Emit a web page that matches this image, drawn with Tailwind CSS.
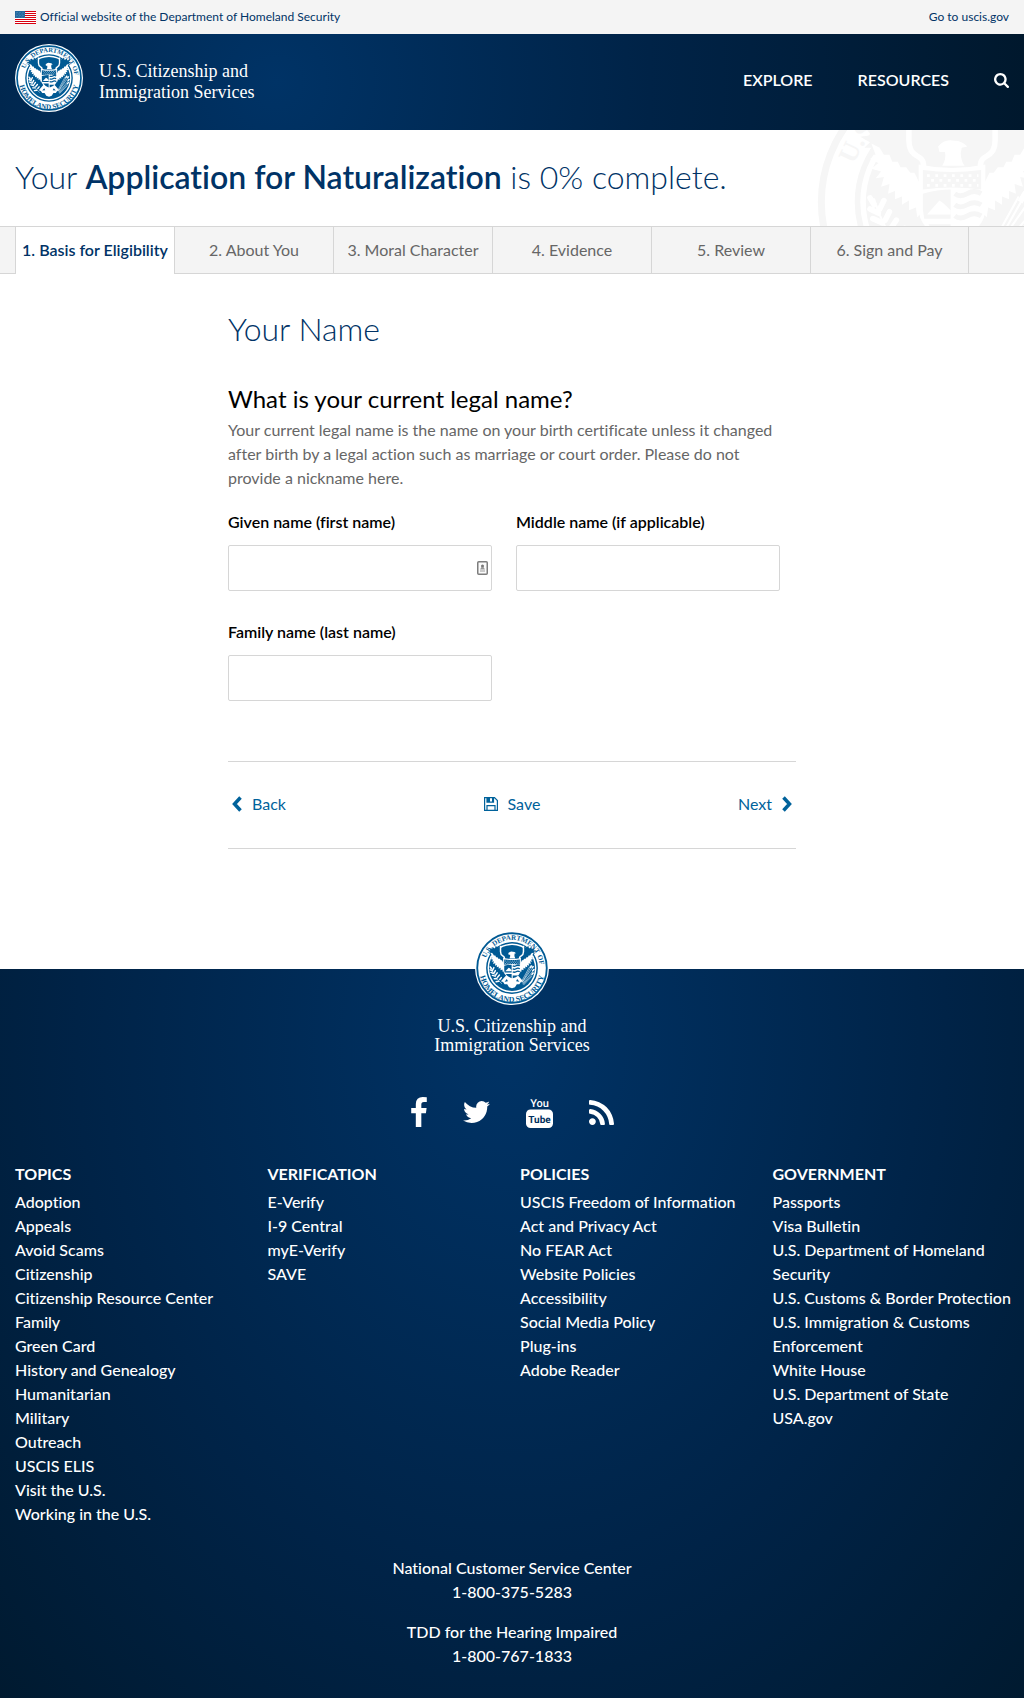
<!DOCTYPE html>
<html lang="en">
<head>
<meta charset="utf-8">
<meta name="viewport" content="width=device-width, initial-scale=1">
<title>Application for Naturalization | USCIS</title>
<script src="https://cdn.jsdelivr.net/npm/@tailwindcss/browser@4"></script>
</head>
<body class="bg-white font-['Lato','Open_Sans',sans-serif] text-base leading-6 text-black [font-variant-ligatures:no-common-ligatures]">

<!-- Department seal: currentColor is the ink, the rest is white -->
<svg class="hidden" aria-hidden="true">
  <defs>
    <path id="arc-top" d="M-71 -25A75 75 0 0 1 75 -6"/>
    <path id="arc-bottom" d="M-88 4A88 88 0 0 0 88 4"/>
    <g id="wing">
      <path fill="currentColor" d="M-33 -60L-38 -54L-44 -60L-46 -53L-53 -57L-53 -52L-62 -53L-58 -48L-66 -47L-59 -43L-63 -39L-54 -39L-57 -34L-50 -34L-51 -28L-44 -29L-44 -23L-38 -25L-36 -18L-31 -21L-29 -13L-22 -13L-22 -26L-31 -42Z"/>
      <path fill="white" d="M-58 -42L-52 -39L-49 -34L-45 -34L-43 -29L-39 -29L-37 -25L-33 -25L-30 -21L-27 -21L-23 -13L-20 6L-25 11L-26 4L-31 6L-31 -1L-36 2L-36 -4L-41 -2L-41 -8L-46 -6L-45 -13L-51 -11L-49 -18L-55 -17L-51 -22L-58 -24L-53 -28L-59 -31L-55 -34Z"/>
      <path fill="none" stroke="white" stroke-width="4" d="M-31 -60V-44Q-31 -36 -25 -33T-21 -24"/>
    </g>
    <symbol id="seal" viewBox="-100 -100 200 200">
      <circle r="100" fill="white"/>
      <circle r="94" fill="none" stroke="currentColor" stroke-width="5"/>
      <circle r="68" fill="none" stroke="currentColor" stroke-width="4"/>
      <circle r="62" fill="currentColor"/>
      <g fill="currentColor" font-family="'Liberation Serif',serif" font-weight="700" font-size="19" text-anchor="middle" text-rendering="geometricPrecision">
        <text><textPath href="#arc-top" startOffset="50%">U.S. DEPARTMENT OF</textPath></text>
        <text font-size="21"><textPath href="#arc-bottom" startOffset="50%">HOMELAND SECURITY</textPath></text>
      </g>
      <use href="#wing"/>
      <use href="#wing" transform="scale(-1 1)"/>
      <path fill="white" d="M-10 -40Q-5 -46 2 -44Q7 -44 11 -40L7 -39Q5 -32 9 -26H-7Q-4 -31 -5 -36L-9 -36Z"/>
      <!-- tail and legs -->
      <path fill="white" d="M-16 20L-30 36L-24 38L-20 44L-13 44L-8 52L0 55L8 52L13 44L20 44L24 38L30 36L16 20Z"/>
      <path fill="currentColor" d="M-14 30L-20 37L-11 36ZM14 30L20 37L11 36Z"/>
      <!-- shield -->
      <path fill="white" d="M-24 -27Q0 -22 24 -27V5Q24 20 0 31Q-24 20 -24 5Z"/>
      <path fill="currentColor" d="M-21 -23Q0 -20 21 -23V-9Q0 -12 -21 -9Z"/>
      <path stroke="white" stroke-width="2" stroke-dasharray="2 4" d="M-18 -19H19M-15 -15.500H18M-18 -12H19"/>
      <path fill="currentColor" d="M-21 -6Q-10 -9 -1 -9V12H-20L-21 5ZM2 20H17Q11 25 2 28ZM-17 16H-1V28Q-12 23 -17 16Z"/>
      <path fill="white" d="M-18 9L-9 -1L-6 1L-1 6V9Z"/>
      <path fill="none" stroke="currentColor" stroke-width="3.500" d="M2 -6Q6 -3 11 -6T21 -6M2 2Q6 5 11 2T21 2M2 10Q6 13 11 10T21 10"/>
      <!-- olive branch -->
      <g fill="none" stroke="white" stroke-linecap="round">
        <path stroke-width="1.500" d="M-28 42Q-48 26 -56 -2"/>
        <path stroke-width="4" d="M-56 2L-59 -3M-53 8L-59 5M-52 5L-49 -1M-50 15L-57 12M-48 13L-45 7M-46 22L-53 20M-44 19L-40 13M-41 29L-48 29M-39 25L-34 19M-36 36L-43 37M-33 31L-29 26"/>
      </g>
      <!-- arrows -->
      <g fill="none" stroke="white" stroke-width="1.500">
        <path d="M27 40L58 -4M28 38L53 -6M29 42L60 4M30 44L58 13M26 36L48 -4M31 46L54 22"/>
        <path stroke-width="4" d="M54 0L58 -5M55 9L60 3M49 0L53 -7M53 18L58 12"/>
      </g>
    </symbol>
  </defs>
</svg>

<div class="flex items-center justify-between bg-[#f4f4f4] px-[15px] py-[5px] text-xs leading-6 text-[#003366]">
  <p class="flex items-center gap-1">
    <svg class="h-[13px] w-[21px]" viewBox="0 0 21 13" role="img" aria-label="Flag of the United States">
      <path fill="#fff" d="M0 0h21v13H0z"/>
      <path stroke="#d8000f" d="M0 .5h21M0 2.500h21M0 4.500h21M0 6.500h21M0 8.500h21M0 10.500h21M0 12.500h21"/>
      <path fill="#24699f" d="M0 0h10v7H0z"/>
      <path stroke="#8db4d2" stroke-width=".5" stroke-dasharray=".5 1" d="M1 1.500h8M1.500 3h8M1 4.500h8M1.500 6h8"/>
    </svg>
    Official website of the Department of Homeland Security
  </p>
  <a href="#">Go to uscis.gov</a>
</div>

<header class="flex items-center justify-between bg-[#003366] bg-[radial-gradient(circle_at_27%_50%,#003366_0%,#002347_50%,#00182d_100%)] px-[15px] pt-2.5 pb-[18px] text-white">
  <a href="#" class="flex items-center gap-4">
    <svg class="size-[68px] text-[#005a94]" role="img" aria-label="Department of Homeland Security seal"><use href="#seal"/></svg>
    <span class="pt-2 font-['Liberation_Serif',serif] text-lg leading-[21px]">U.S. Citizenship and<br>Immigration Services</span>
  </a>
  <nav class="flex items-center gap-[45px] pt-1 font-semibold">
    <a href="#">EXPLORE</a>
    <a href="#">RESOURCES</a>
    <button type="button" aria-label="Search">
      <svg class="size-[15px]" viewBox="64 128 1664 1664" fill="currentColor"><path d="M1216 832q0-185-131.500-316.500t-316.500-131.500-316.500 131.500-131.500 316.500 131.500 316.500 316.500 131.500 316.500-131.500 131.500-316.500zm512 832q0 52-38 90t-90 38q-54 0-90-38l-343-342q-179 124-399 124-143 0-273.500-55.500t-225-150-150-225-55.500-273.500 55.500-273.500 150-225 225-150 273.500-55.500 273.500 55.500 225 150 150 225 55.500 273.500q0 220-124 399l343 343q37 37 37 90z"/></svg>
    </button>
  </nav>
</header>

<div class="relative overflow-hidden px-[15px] pt-[23px] pb-[25px]">
  <svg class="absolute -top-[67px] -right-[67px] size-[278px] text-[#f6f6f6]" aria-hidden="true"><use href="#seal"/></svg>
  <h1 class="relative text-[32px] leading-[48px] font-light text-[#003366]">Your <strong class="font-semibold">Application for Naturalization</strong> is 0% complete.</h1>
</div>

<nav class="border-y border-[#d6d6d6] bg-[#f4f4f4] px-[15px]">
  <ol class="-mb-px grid grid-cols-[160px_159px_159px_159px_159px_158px] text-center leading-[46px] text-[#666]">
    <li class="border-x border-[#d6d6d6] bg-white pb-px font-semibold text-[#003366]"><a href="#" aria-current="step">1. Basis for Eligibility</a></li>
    <li class="border-r border-[#d6d6d6]"><a href="#">2. About You</a></li>
    <li class="border-r border-[#d6d6d6]"><a href="#">3. Moral Character</a></li>
    <li class="border-r border-[#d6d6d6]"><a href="#">4. Evidence</a></li>
    <li class="border-r border-[#d6d6d6]"><a href="#">5. Review</a></li>
    <li class="border-r border-[#d6d6d6]"><a href="#">6. Sign and Pay</a></li>
  </ol>
</nav>

<main class="mx-auto max-w-[568px] pt-[31px] pb-[120px]">
  <h2 class="text-[32px] leading-[48px] font-light text-[#003366]">Your Name</h2>
  <form>
    <h3 class="mt-7 mb-px text-2xl leading-9">What is your current legal name?</h3>
    <p class="text-[#666]">Your current legal name is the name on your birth certificate unless it changed after birth by a legal action such as marriage or court order. Please do not provide a nickname here.</p>
    <div class="mt-5 mr-4 grid grid-cols-2 gap-x-6 gap-y-[29px]">
      <div>
        <label for="given" class="block font-semibold">Given name (first name)</label>
        <div class="relative mt-[11px]">
          <input id="given" type="text" class="block h-[46px] w-full rounded-xs border border-[#d6d6d6] pr-8 pl-3">
          <svg class="pointer-events-none absolute top-4 right-1 h-[14px] w-[11px]" viewBox="0 0 11 14" aria-hidden="true"><rect x=".75" y=".75" width="9.500" height="12.500" rx="1" fill="#fafafa" stroke="#7d7d7d" stroke-width="1.500"/><circle cx="5.500" cy="5" r="1.500" fill="#777"/><path fill="#999" d="M4.500 6h2l1.500 2.500h-5zM3 9.500h5v1h-5z"/></svg>
        </div>
      </div>
      <div>
        <label for="middle" class="block font-semibold">Middle name (if applicable)</label>
        <input id="middle" type="text" class="mt-[11px] block h-[46px] w-full rounded-xs border border-[#d6d6d6] px-3">
      </div>
      <div>
        <label for="family" class="block font-semibold">Family name (last name)</label>
        <input id="family" type="text" class="mt-[11px] block h-[46px] w-full rounded-xs border border-[#d6d6d6] px-3">
      </div>
    </div>
    <div class="mt-[60px] flex items-center justify-between border-y border-[#d6d6d6] px-1 pt-[30px] pb-8 text-[#00629b]">
      <button type="button" class="flex items-center gap-2.5">
        <svg class="h-4 w-[10px]" viewBox="0 0 10 16" fill="none" stroke="currentColor" stroke-width="3.500"><path d="M8.500 1.500L2.500 8l6 6.500"/></svg>
        Back
      </button>
      <button type="button" class="flex items-center gap-2.5">
        <svg class="size-[14px]" viewBox="0 0 14 14" fill="none" stroke="currentColor" stroke-width="1.200"><path d="M.6.600h9.900l2.900 2.900v9.900H.6zM3 13.400V8.600h8v4.800M3 .6v4.500h6.500V.6"/><path fill="currentColor" stroke="none" d="M3 .6h3v4.500H3zM8 1h1.500v4H8z"/></svg>
        Save
      </button>
      <button type="button" class="flex items-center gap-2.5">
        Next
        <svg class="h-4 w-[10px]" viewBox="0 0 10 16" fill="none" stroke="currentColor" stroke-width="3.500"><path d="M1.500 1.500l6 6.500-6 6.500"/></svg>
      </button>
    </div>
  </form>
</main>

<footer class="bg-[#002850] bg-[radial-gradient(ellipse_at_50%_10%,#003366_0%,#002347_60%,#001a30_100%)] px-[15px] pb-[30px] font-medium text-white">
  <a href="#" class="flex flex-col items-center text-center">
    <svg class="-mt-[38px] size-[74px] text-[#005a94]" role="img" aria-label="Department of Homeland Security seal"><use href="#seal"/></svg>
    <span class="mt-3 font-['Liberation_Serif',serif] text-lg leading-[19px] font-normal">U.S. Citizenship and<br>Immigration Services</span>
  </a>
  <div class="mt-10 flex items-center justify-center gap-9">
    <a href="#" aria-label="Facebook"><svg class="h-[30px] w-4" viewBox="479 0 864 1664" fill="currentColor"><path d="M1343 12v264h-157q-86 0-116 36t-30 108v189h293l-39 296h-254v759h-306v-759h-255v-296h255v-218q0-186 104-288.500t277-102.500q147 0 228 12z"/></svg></a>
    <a href="#" aria-label="Twitter"><svg class="h-[22px] w-[27px]" viewBox="108 256 1576 1280" fill="currentColor"><path d="M1684 408q-67 98-162 167 1 14 1 42 0 130-38 259.500t-115.500 248.500-184.500 210.500-258 146-323 54.500q-271 0-496-145 35 4 78 4 225 0 401-138-105-2-188-64.500t-114-159.500q33 5 61 5 43 0 85-11-112-23-185.500-111.500t-73.500-205.500v-4q68 38 146 41-66-44-105-115t-39-154q0-88 44-163 121 149 294.500 238.500t371.500 99.500q-8-38-8-74 0-134 94.500-228.500t228.500-94.500q140 0 236 102 109-21 205-78-37 115-142 178 93-10 186-50z"/></svg></a>
    <a href="#" aria-label="YouTube"><svg class="h-[34px] w-[27px]" viewBox="0 0 27 34" fill="currentColor">
      <g font-family="'Liberation Sans Narrow',Roboto,sans-serif" text-anchor="middle" text-rendering="geometricPrecision">
        <text x="13.500" y="12" font-size="11" font-weight="500">You</text>
        <rect x="0" y="14.500" width="27" height="18.500" rx="4.500"/>
        <text x="13.500" y="28" font-size="10" font-weight="700" fill="#003060">Tube</text>
      </g></svg></a>
    <a href="#" aria-label="RSS"><svg class="size-[25px]" viewBox="192 128 1408 1408" fill="currentColor"><path d="M576 1344q0 80-56 136t-136 56-136-56-56-136 56-136 136-56 136 56 56 136zm512 123q2 28-17 48-18 21-47 21h-135q-25 0-43-16.500t-20-41.500q-22-229-184.500-391.500t-391.500-184.500q-25-2-41.500-20t-16.500-43v-135q0-29 21-47 17-17 43-17h5q160 13 306 80.500t259 181.500q114 113 181.500 259t80.500 306zm512 2q2 27-18 47-18 20-46 20h-143q-26 0-44.500-17.500t-19.500-42.500q-12-215-101-408.500t-231.500-336-336-231.500-408.500-102q-25-1-42.500-19.500t-17.500-43.500v-143q0-28 20-46 18-18 44-18h3q262 13 501.500 120t425.500 294q187 186 294 425.500t120 501.500z"/></svg></a>
  </div>
  <div class="mt-[33px] grid grid-cols-4 gap-4">
    <section>
      <h4 class="mb-1 font-bold">TOPICS</h4>
      <ul>
        <li><a href="#">Adoption</a></li>
        <li><a href="#">Appeals</a></li>
        <li><a href="#">Avoid Scams</a></li>
        <li><a href="#">Citizenship</a></li>
        <li><a href="#">Citizenship Resource Center</a></li>
        <li><a href="#">Family</a></li>
        <li><a href="#">Green Card</a></li>
        <li><a href="#">History and Genealogy</a></li>
        <li><a href="#">Humanitarian</a></li>
        <li><a href="#">Military</a></li>
        <li><a href="#">Outreach</a></li>
        <li><a href="#">USCIS ELIS</a></li>
        <li><a href="#">Visit the U.S.</a></li>
        <li><a href="#">Working in the U.S.</a></li>
      </ul>
    </section>
    <section>
      <h4 class="mb-1 font-bold">VERIFICATION</h4>
      <ul>
        <li><a href="#">E-Verify</a></li>
        <li><a href="#">I-9 Central</a></li>
        <li><a href="#">myE-Verify</a></li>
        <li><a href="#">SAVE</a></li>
      </ul>
    </section>
    <section>
      <h4 class="mb-1 font-bold">POLICIES</h4>
      <ul>
        <li><a href="#">USCIS Freedom of Information<br>Act and Privacy Act</a></li>
        <li><a href="#">No FEAR Act</a></li>
        <li><a href="#">Website Policies</a></li>
        <li><a href="#">Accessibility</a></li>
        <li><a href="#">Social Media Policy</a></li>
        <li><a href="#">Plug-ins</a></li>
        <li><a href="#">Adobe Reader</a></li>
      </ul>
    </section>
    <section>
      <h4 class="mb-1 font-bold">GOVERNMENT</h4>
      <ul>
        <li><a href="#">Passports</a></li>
        <li><a href="#">Visa Bulletin</a></li>
        <li><a href="#">U.S. Department of Homeland<br>Security</a></li>
        <li class="whitespace-nowrap"><a href="#">U.S. Customs &amp; Border Protection</a></li>
        <li><a href="#">U.S. Immigration &amp; Customs<br>Enforcement</a></li>
        <li><a href="#">White House</a></li>
        <li><a href="#">U.S. Department of State</a></li>
        <li><a href="#">USA.gov</a></li>
      </ul>
    </section>
  </div>
  <div class="mt-[30px] space-y-4 text-center">
    <p>National Customer Service Center<br>1-800-375-5283</p>
    <p>TDD for the Hearing Impaired<br>1-800-767-1833</p>
  </div>
</footer>
</body>
</html>
